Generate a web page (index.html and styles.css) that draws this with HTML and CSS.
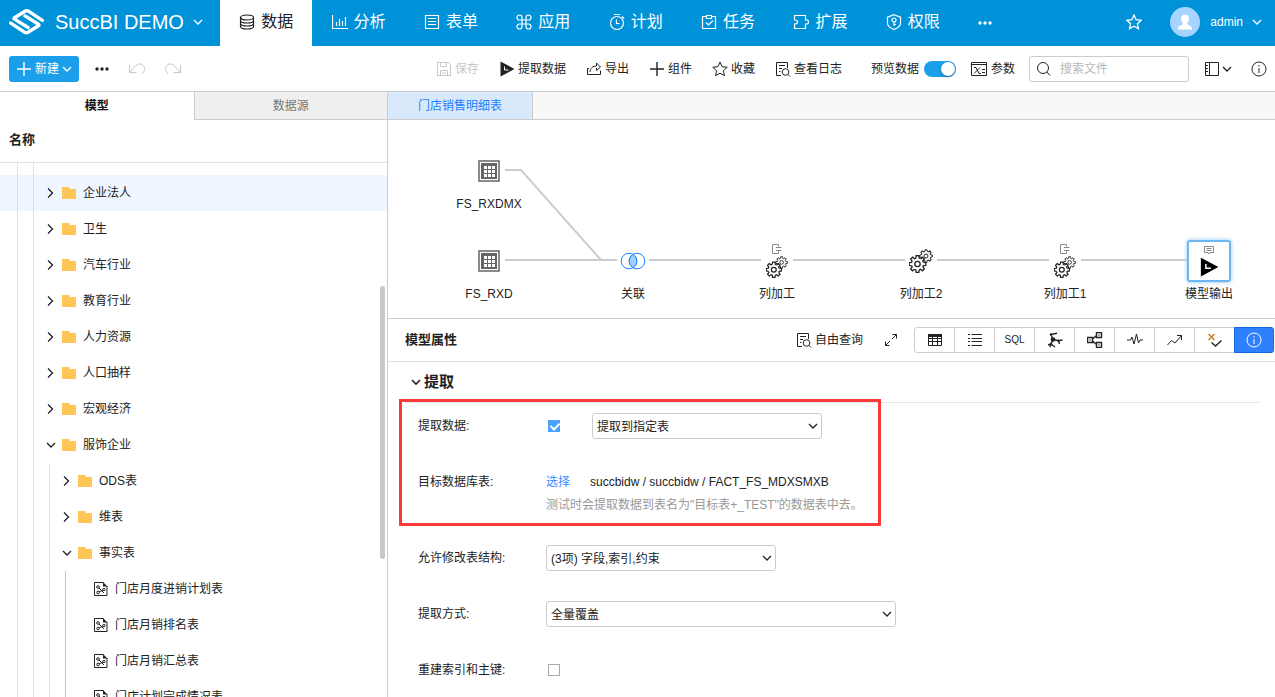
FILE: index.html
```
<!DOCTYPE html>
<html lang="zh-CN">
<head>
<meta charset="utf-8">
<title>SuccBI DEMO</title>
<link rel="stylesheet" href="styles.css">
</head>
<body>
<svg class="sprite" aria-hidden="true">
  <symbol id="down" viewBox="0 0 10 10"><path d="M1 3l4 4 4-4"/></symbol>
  <symbol id="right" viewBox="0 0 10 10"><path d="M2 .5L6.500 5 2 9.500"/></symbol>
  <symbol id="star" viewBox="0 0 16 16"><path d="M8 1l2.100 4.700 5.100.6-3.800 3.400 1.100 5L8 12.200l-4.500 2.500 1.100-5L.8 6.300l5.100-.6z"/></symbol>
  <symbol id="plus" viewBox="0 0 16 16"><path class="heavy" d="M8 1v14M1 8h14"/></symbol>
  <symbol id="info" viewBox="0 0 16 16"><circle cx="8" cy="8" r="7"/><path d="M8 7v5M8 4v1.500"/></symbol>
  <symbol id="dots" viewBox="0 0 16 16"><g class="solid"><circle cx="3" cy="8" r="1.700"/><circle cx="8" cy="8" r="1.700"/><circle cx="13" cy="8" r="1.700"/></g></symbol>
  <symbol id="log" viewBox="0 0 16 16"><path d="M6 14.500H1.500v-13h11V7M4 4.500h6M4 7.500h3M4 10.500h1.500"/><circle cx="10.500" cy="11" r="3.300"/><path d="M13 13.500l2 2"/></symbol>
  <symbol id="play" viewBox="0 0 16 16"><path class="solid" d="M1.500.5v15l14-7.500z"/><path class="inner" d="M5.500 5.500V9h4"/></symbol>
  <symbol id="folder" viewBox="0 0 14 12"><path class="folder-shape" d="M0 0h7l1 2h6v10H0z"/></symbol>
  <symbol id="model" viewBox="0 0 14 16"><path d="M9.500 1.500h-9v13h12.500V5"/><path class="solid" d="M9 1l4.500 4.500H9z"/><circle cx="4" cy="6" r="1.300"/><circle cx="4" cy="11.500" r="1.300"/><circle cx="10" cy="8.500" r="1.200"/><path d="M5 7l5 5M5 11l4-2"/></symbol>
  <symbol id="datatable" viewBox="0 0 22 22"><path class="grey" d="M1 1h20v20H1z"/><path class="grey-fill" d="M3 3h16v16H3z"/><path class="white-fill" d="M6 6h3v3H6zM10 6h3v3h-3zM14 6h3v3h-3zM6 10h3v3H6zM10 10h3v3h-3zM14 10h3v3h-3zM6 14h3v3H6zM10 14h3v3h-3zM14 14h3v3h-3z"/></symbol>
  <symbol id="gear" viewBox="-9 -9 18 18">
    <circle class="disc" r="5.600"/><circle r="2.400"/>
    <g id="quarter"><path d="M-1.500-5.300L-1.200-7.500H1.200L1.500-5.300 2.690-4.810"/><path transform="rotate(45)" d="M-1.500-5.300L-1.200-7.500H1.200L1.500-5.300 2.690-4.810"/></g>
    <use href="#quarter" transform="rotate(90)"/><use href="#quarter" transform="rotate(180)"/><use href="#quarter" transform="rotate(270)"/>
  </symbol>
  <symbol id="gears" viewBox="0 0 24 24"><use href="#gear" x="9.500" y="-.5" width="15" height="15"/><use href="#gear" x="-1.500" y="5" width="20" height="20"/></symbol>
  <symbol id="out" viewBox="0 0 10 10"><path d="M6.500 2.500v-2h-6v9h6v-2M4 3.500h5.500M4 6.500h5.500"/></symbol>
</svg>

<header class="header">
  <button class="brand">
    <svg class="logo" viewBox="0 0 36 28"><path d="M33.300 12.300L19.500 3.200q-1.800-1-3.500 0L5.500 9.700q-1 .7 0 1.400L19 19.500M1.700 15.100l13.800 9.100q1.800 1 3.500 0L29.500 17.700q1-.7 0-1.400L16 7.900"/></svg>
    <span>SuccBI DEMO</span>
    <svg class="icon tiny"><use href="#down"/></svg>
  </button>
  <nav class="nav">
    <a href="#" class="active"><svg class="icon" viewBox="0 0 16 16"><ellipse cx="8" cy="3.500" rx="6.500" ry="2.500"/><path d="M1.500 3.500v9c0 3.300 13 3.300 13 0v-9M1.500 6.500c0 3.300 13 3.300 13 0M1.500 9.500c0 3.300 13 3.300 13 0"/></svg>数据</a>
    <a href="#"><svg class="icon" viewBox="0 0 16 16"><path d="M.5 1v13.500H16M4.500 12V8M7.500 12V5M10.500 12V7M13.500 12V3"/></svg>分析</a>
    <a href="#"><svg class="icon" viewBox="0 0 16 16"><path d="M1.500 1.500h13v13h-13zM4 4.500h8M4 7.500h8M4 10.500h8"/></svg>表单</a>
    <a href="#"><svg class="icon" viewBox="0 0 16 16"><path d="M6 6V3.500A2.500 2.500 0 1 0 3.500 6h9A2.500 2.500 0 1 0 10 3.500v9a2.500 2.500 0 1 0 2.500-2.500h-9A2.500 2.500 0 1 0 6 12.500z"/></svg>应用</a>
    <a href="#"><svg class="icon" viewBox="0 0 16 16"><circle cx="8" cy="9" r="6.500"/><path d="M5 .5h6M13 2.500l2 2M7.500 5.500v4h3"/></svg>计划</a>
    <a href="#"><svg class="icon" viewBox="0 0 16 16"><path d="M5 2.500H1.500v12h13v-12H11M5.500 1.500h5v3h-5zM5 8.500l2.500 2.500L12 6.500"/></svg>任务</a>
    <a href="#"><svg class="icon" viewBox="0 0 16 16"><path d="M1.500 6V1.500h11V6q3-.5 3 2t-3 2v4.500h-11V10q3 0 3-2t-3-2z"/></svg>扩展</a>
    <a href="#"><svg class="icon" viewBox="0 0 16 16"><path d="M8 .7l6.500 2.500V9q0 4-6.500 6.500Q1.500 13 1.500 9V3.200z"/><circle cx="8" cy="6" r="2"/><path d="M8 8v4M8 10.500h2"/></svg>权限</a>
  </nav>
  <button class="plain more" aria-label="更多"><svg class="icon"><use href="#dots"/></svg></button>
  <div class="account">
    <button class="plain" aria-label="收藏夹"><svg class="icon"><use href="#star"/></svg></button>
    <svg class="avatar" viewBox="0 0 30 30"><circle cx="15" cy="15" r="15"/><path d="M15 7.500c2.500 0 4 1.800 4 4.200 0 2-1 3.600-1.800 4.300v1.500c2.500 1 4.800 1.500 4.800 4.500v.5H8V22c0-3 2.300-3.500 4.800-4.500V16c-.8-.7-1.800-2.300-1.800-4.300 0-2.400 1.500-4.200 4-4.200z"/></svg>
    <button class="plain user">admin<svg class="icon tiny"><use href="#down"/></svg></button>
  </div>
</header>

<div class="toolbar">
  <div class="tools-left">
    <button class="create"><svg class="icon"><use href="#plus"/></svg>新建<svg class="icon tiny"><use href="#down"/></svg></button>
    <button class="plain" aria-label="更多操作"><svg class="icon"><use href="#dots"/></svg></button>
    <button class="plain off history" aria-label="撤销"><svg class="icon wide" viewBox="0 0 18 16"><path d="M1.500 4v7.500h7M1.500 11.500l6-6.500q4-4 7.500-.5 3.500 4-1 8.500"/></svg></button>
    <button class="plain off history" aria-label="重做"><svg class="icon wide" viewBox="0 0 18 16"><path d="M16.500 4v7.500h-7M16.500 11.500l-6-6.500q-4-4-7.500-.5-3.500 4 1 8.500"/></svg></button>
  </div>
  <div class="tools-right">
    <div class="tool-list">
      <button class="plain off"><svg class="icon" viewBox="0 0 16 16"><path d="M1.500 1.500h11l2 2v11h-13zM4.500 1.500v4h6v-4M4.500 14.500v-5h7v5M6 12h4"/></svg>保存</button>
      <button class="plain"><svg class="icon"><use href="#play"/></svg>提取数据</button>
      <button class="plain"><svg class="icon" viewBox="0 0 16 16"><path d="M3 7.500H1.500v6h13v-4M4 11c0-4 3-6 6.500-6V2l4 4-4 3.500V7"/></svg>导出</button>
      <button class="plain"><svg class="icon"><use href="#plus"/></svg>组件</button>
      <button class="plain"><svg class="icon"><use href="#star"/></svg>收藏</button>
      <button class="plain"><svg class="icon"><use href="#log"/></svg>查看日志</button>
    </div>
    <label class="preview">预览数据<input type="checkbox" class="switch" checked></label>
    <button class="plain params"><svg class="icon" viewBox="0 0 16 16"><path d="M.5 1.500h15v13H.5zM.5 3.500h15M3 6.500h2l3 6h2M9 6.500l-6 6M11 8.500h3M11 11.500h3"/></svg>参数</button>
    <label class="search"><svg class="icon" viewBox="0 0 16 16"><circle cx="7" cy="7" r="5.500"/><path d="M11 11l3 3.500"/></svg><input type="search" placeholder="搜索文件" aria-label="搜索文件"></label>
    <button class="plain layout" aria-label="布局"><svg class="icon" viewBox="0 0 16 16"><path d="M1.500 1.500h13v13h-13zM5.500 1.500v13M2 4.500h2M2 7.500h2M2 10.500h2"/></svg><svg class="icon tiny"><use href="#down"/></svg></button>
    <button class="plain" aria-label="信息"><svg class="icon"><use href="#info"/></svg></button>
  </div>
</div>

<main class="main">
  <aside class="sidebar">
    <div class="side-tabs"><button class="current">模型</button><button>数据源</button></div>
    <div class="column-title">名称</div>
    <div class="tree">
      <div class="row stub"><i></i><i></i></div>
      <div class="row picked"><i></i><i></i><svg class="icon tiny"><use href="#right"/></svg><svg class="folder"><use href="#folder"/></svg>企业法人</div>
      <div class="row"><i></i><i></i><svg class="icon tiny"><use href="#right"/></svg><svg class="folder"><use href="#folder"/></svg>卫生</div>
      <div class="row"><i></i><i></i><svg class="icon tiny"><use href="#right"/></svg><svg class="folder"><use href="#folder"/></svg>汽车行业</div>
      <div class="row"><i></i><i></i><svg class="icon tiny"><use href="#right"/></svg><svg class="folder"><use href="#folder"/></svg>教育行业</div>
      <div class="row"><i></i><i></i><svg class="icon tiny"><use href="#right"/></svg><svg class="folder"><use href="#folder"/></svg>人力资源</div>
      <div class="row"><i></i><i></i><svg class="icon tiny"><use href="#right"/></svg><svg class="folder"><use href="#folder"/></svg>人口抽样</div>
      <div class="row"><i></i><i></i><svg class="icon tiny"><use href="#right"/></svg><svg class="folder"><use href="#folder"/></svg>宏观经济</div>
      <div class="row"><i></i><i></i><svg class="icon tiny"><use href="#down"/></svg><svg class="folder"><use href="#folder"/></svg>服饰企业</div>
      <div class="row"><i></i><i></i><i></i><svg class="icon tiny"><use href="#right"/></svg><svg class="folder"><use href="#folder"/></svg>ODS表</div>
      <div class="row"><i></i><i></i><i></i><svg class="icon tiny"><use href="#right"/></svg><svg class="folder"><use href="#folder"/></svg>维表</div>
      <div class="row"><i></i><i></i><i></i><svg class="icon tiny"><use href="#down"/></svg><svg class="folder"><use href="#folder"/></svg>事实表</div>
      <div class="row"><i></i><i></i><i></i><i class="near"></i><svg class="icon file"><use href="#model"/></svg>门店月度进销计划表</div>
      <div class="row"><i></i><i></i><i></i><i class="near"></i><svg class="icon file"><use href="#model"/></svg>门店月销排名表</div>
      <div class="row"><i></i><i></i><i></i><i class="near"></i><svg class="icon file"><use href="#model"/></svg>门店月销汇总表</div>
      <div class="row"><i></i><i></i><i></i><i class="near"></i><svg class="icon file"><use href="#model"/></svg>门店计划完成情况表</div>
      <div class="scrollbar"></div>
    </div>
  </aside>

  <section class="work">
    <div class="doc-tabs"><button>门店销售明细表</button></div>
    <div class="canvas">
      <svg class="links" width="860" height="190"><path d="M117 50h16l80 90M117 140h112M261 140h112M405 140h112M549 140h112M693 140h106"/></svg>
      <div class="node n1"><span class="pic"><svg class="tbl"><use href="#datatable"/></svg></span>FS_RXDMX</div>
      <div class="node n2"><span class="pic"><svg class="tbl"><use href="#datatable"/></svg></span>FS_RXD</div>
      <div class="node n3"><span class="pic"><svg class="join" viewBox="0 0 26 18"><circle cx="9" cy="9" r="7.800"/><circle cx="17" cy="9" r="7.800"/><path d="M13 2.300a7.800 7.800 0 0 1 0 13.400a7.800 7.800 0 0 1 0-13.400z"/></svg></span>关联</div>
      <div class="node n4"><span class="pic"><svg class="badge"><use href="#out"/></svg><svg class="gears"><use href="#gears"/></svg></span>列加工</div>
      <div class="node n5"><span class="pic"><svg class="gears big"><use href="#gears"/></svg></span>列加工2</div>
      <div class="node n6"><span class="pic"><svg class="badge"><use href="#out"/></svg><svg class="gears"><use href="#gears"/></svg></span>列加工1</div>
      <div class="node n7"><span class="pic chosen"><svg class="badge" viewBox="0 0 10 10"><path d="M.5 1.500h9v6H6l-1 1.500-1-1.500H.5zM2.500 3.500h5M2.500 5.500h5"/></svg><svg class="gears run"><use href="#play"/></svg></span>模型输出</div>
    </div>

    <div class="panel-head">
      <h2>模型属性</h2>
      <button class="plain"><svg class="icon"><use href="#log"/></svg>自由查询</button>
      <button class="plain expand" aria-label="展开"><svg class="icon" viewBox="0 0 16 16"><path d="M9.500 2.500h4v4M13.500 2.500L9 7M6.500 13.500h-4v-4M2.500 13.500L7 9"/></svg></button>
      <div class="views">
        <button aria-label="表格"><svg class="icon" viewBox="0 0 16 16"><path d="M1.500 2.500h13v11h-13zM1.500 6.500h13M1.500 9.500h13M5.500 4v9.500M10.500 4v9.500"/><path class="solid" d="M1 2h14v3H1z"/></svg></button>
        <button aria-label="列表"><svg class="icon" viewBox="0 0 16 16"><path d="M4.500 2.500H15M4.500 6.500H15M4.500 9.500H15M4.500 13.500H15M1 2.500h2M1 6.500h2M1 9.500h2M1 13.500h2"/></svg></button>
        <button class="sql">SQL</button>
        <button aria-label="血缘"><svg class="icon" viewBox="0 0 16 16"><path class="heavy" d="M6 7.500L4 2.500l6-1.200M6 7.500l5.500 1.200 4-.7M11.500 8.700l1 3.300M6 7.500l-2 4.500-3 1M4 12l-1 3M4 12l4 3"/><g class="solid"><circle cx="6" cy="7.500" r="2.300"/><circle cx="4" cy="2.500" r="1.200"/><circle cx="11.500" cy="8.700" r="1.200"/><circle cx="4" cy="12" r="1.200"/></g></svg></button>
        <button aria-label="关系"><svg class="icon" viewBox="0 0 16 16"><path class="heavy" d="M.5 5.500h5v5h-5zM9.500.5h5v5h-5zM9.500 10.500h5v5h-5zM5.500 7l4-3.500M5.500 9l4 3.500M2.500 8h1M11.500 3h1M11.500 13h1"/></svg></button>
        <button aria-label="监控"><svg class="icon" viewBox="0 0 16 16"><path d="M0 8h3.500l1.500-3 2 7 2.500-10 2 9 1.500-3H16"/></svg></button>
        <button aria-label="趋势"><svg class="icon" viewBox="0 0 16 16"><path d="M.5 13l4-4.500L8 11l6.500-7.500M10 3.500h4.500V8"/></svg></button>
        <button aria-label="校验"><svg class="icon" viewBox="0 0 16 16"><path class="amber" d="M1.500 2l6 6M7.500 2l-6 6"/><path class="heavy" d="M4.500 10.500l4 3.500 6-5.500"/></svg></button>
        <button class="on" aria-label="属性"><svg class="icon"><use href="#info"/></svg></button>
      </div>
    </div>

    <div class="panel">
      <h3><svg class="icon tiny"><use href="#down"/></svg>提取</h3>
      <form class="form">
        <label for="extract">提取数据:</label>
        <div class="control"><input type="checkbox" class="tick" id="extract" checked>
          <span class="pick medium"><select aria-label="提取目标"><option>提取到指定表</option></select><svg class="icon tiny"><use href="#down"/></svg></span></div>
        <span>目标数据库表:</span>
        <div><div class="control target"><a href="#">选择</a><span>succbidw / succbidw / FACT_FS_MDXSMXB</span></div>
          <p class="hint">测试时会提取数据到表名为"目标表+_TEST"的数据表中去。</p></div>
        <label for="alter">允许修改表结构:</label>
        <div class="control"><span class="pick medium"><select id="alter"><option>(3项) 字段,索引,约束</option></select><svg class="icon tiny"><use href="#down"/></svg></span></div>
        <label for="mode">提取方式:</label>
        <div class="control"><span class="pick large"><select id="mode"><option>全量覆盖</option></select><svg class="icon tiny"><use href="#down"/></svg></span></div>
        <label for="rebuild">重建索引和主键:</label>
        <div class="control"><input type="checkbox" class="tick" id="rebuild"></div>
      </form>
      <div class="callout"></div>
    </div>
  </section>
</main>
</body>
</html>
```

FILE: styles.css
```
* { box-sizing: border-box; }
body {
  margin: 0;
  height: 100vh;
  display: flex;
  flex-direction: column;
  overflow: hidden;
  background: #fff;
  color: #222;
  font: 12px/18px "Liberation Sans", "Noto Sans CJK SC", sans-serif;
}
button, input, select { font: inherit; color: inherit; margin: 0; }
button { border: 0; background: none; padding: 0; }
svg { flex: none; fill: none; stroke: currentColor; display: block; }
.sprite { position: absolute; width: 0; height: 0; }
.icon { width: 16px; height: 16px; }
.icon.tiny { width: 10px; height: 10px; stroke-width: 1.3; }
.icon.wide { width: 18px; }
.heavy { stroke-width: 1.4; }
.solid { fill: currentColor; stroke: none; }
.inner { stroke: #fff; }
.plain { display: flex; align-items: center; gap: 3px; white-space: nowrap; }
.off { color: #c8c8c8; }

/* header */
.header { flex: none; height: 46px; display: flex; background: #0092d9; color: #fff; }
.brand { flex: 0 0 220px; display: flex; align-items: center; padding: 0 0 2px 9px; font-size: 20px; white-space: nowrap; }
.logo { width: 36px; height: 28px; margin-right: 10px; stroke-width: 3.4; stroke-linejoin: round; stroke-linecap: round; }
.brand .tiny { margin-left: 9px; }
.nav { flex: 0 1 739px; display: grid; grid-template-columns: repeat(8, 1fr); }
.nav a { display: flex; align-items: center; justify-content: center; gap: 6px; padding-bottom: 2px; color: inherit; text-decoration: none; font-size: 16px; white-space: nowrap; }
.nav .active { background: #fff; color: #222; }
.nav .icon { stroke-width: 1.2; }
.more { margin-left: 18px; }
.account { margin-left: auto; display: flex; align-items: center; padding: 0 13px 2px 0; }
.account .icon { stroke-width: 1.3; }
.avatar { width: 30px; height: 30px; margin: 0 10px 0 28px; stroke: none; }
.avatar circle { fill: #a6d4ff; }
.avatar path { fill: #fff; }
.user { gap: 9px; }

/* toolbar */
.toolbar { flex: none; height: 46px; display: flex; align-items: center; justify-content: space-between; border-bottom: 1px solid #ccc; padding: 0 8px 0 9px; }
.tools-left, .tools-right, .tool-list { display: flex; align-items: center; }
.tools-left { gap: 15px; }
.history { margin-left: 3px; }
.tool-list { gap: 20px; }
.create { display: flex; align-items: center; gap: 3px; width: 70px; height: 26px; padding-left: 7px; border-radius: 3px; background: #1c9fea; color: #fff; }
.preview { display: flex; align-items: center; gap: 5px; margin-left: 29px; }
.switch { appearance: none; width: 32px; height: 16px; padding: 1px; border-radius: 8px; background: #1c9fea; }
.switch::before { content: ""; display: block; width: 14px; height: 14px; margin-left: 16px; border-radius: 7px; background: #fff; box-shadow: 0 1px 2px #0006; }
.params { margin-left: 15px; gap: 4px; }
.search { display: flex; align-items: center; gap: 8px; width: 160px; height: 26px; margin: 0 15px 0 14px; padding: 0 6px; border: 1px solid #ccc; border-radius: 3px; }
.search input { width: 100%; min-width: 0; border: 0; padding: 0; outline: 0; background: none; }
.search input::placeholder { color: #b8b8b8; }
.layout { margin-right: 19px; gap: 2px; }

/* sidebar */
.main { flex: 1; min-height: 0; display: flex; }
.sidebar { flex: 0 0 388px; display: flex; flex-direction: column; border-right: 1px solid #ccc; }
.side-tabs { display: grid; grid-template-columns: 1fr 1fr; height: 28px; flex: none; }
.side-tabs button { background: #efefef; color: #777; border-left: 1px solid #ccc; border-bottom: 1px solid #ccc; }
.side-tabs .current { background: #fff; color: #111; font-weight: bold; border: 0; }
.column-title { flex: none; height: 43px; padding-left: 9px; border-bottom: 1px solid #e2e2e2; font-size: 13px; line-height: 40px; font-weight: bold; }
.tree { flex: 1; min-height: 0; overflow: hidden; position: relative; }
.row { height: 36px; display: flex; align-items: center; white-space: nowrap; }
.row i { align-self: stretch; width: 16px; border-right: 1px solid #e0e0e0; }
.row i:first-child { width: 18px; }
.row .near { border-color: #c4c4c4; }
.row.stub { height: 12px; }
.picked { background: #f0f6ff; }
.row .tiny { margin: 0 6px 0 12px; }
.folder { width: 14px; height: 12px; margin-right: 7px; }
.folder-shape { fill: #fdc656; stroke: none; }
.file { width: 14px; height: 16px; margin: 0 7px 0 28px; }
.scrollbar { position: absolute; right: 2px; top: 123px; width: 5px; height: 273px; border-radius: 3px; background: #c8c8c8; }

/* work area */
.work { flex: 1; min-width: 0; display: flex; flex-direction: column; }
.doc-tabs { flex: none; height: 28px; display: flex; background: #f8f8f8; border-bottom: 1px solid #ccc; }
.doc-tabs button { padding: 0 30px; background: #d8e9fc; color: #1a80ff; border-right: 1px solid #ccc; }
.canvas { flex: none; height: 199px; position: relative; border-bottom: 1px solid #ccc; overflow: hidden; }
.links { position: absolute; left: 0; top: 0; stroke: #ccc; stroke-width: 2; }
.node { position: absolute; width: 90px; display: flex; flex-direction: column; align-items: center; gap: 3px; white-space: nowrap; }
.pic { width: 44px; height: 42px; display: flex; flex-direction: column; align-items: center; justify-content: center; }
.chosen { border: 2px solid #6db6f0; border-radius: 3px; background: #fff; box-shadow: 0 0 4px #8cc8f8; }
.n1 { left: 56px; top: 30px; }
.n2 { left: 56px; top: 120px; }
.n3 { left: 200px; top: 120px; }
.n4 { left: 344px; top: 120px; }
.n5 { left: 488px; top: 120px; }
.n6 { left: 632px; top: 120px; }
.n7 { left: 776px; top: 120px; }
.tbl { width: 22px; height: 22px; stroke: none; }
.grey { stroke: #666; stroke-width: 1.5; }
.grey-fill { fill: #666; }
.white-fill { fill: #fff; }
.join { width: 26px; height: 18px; stroke: #1a84ff; }
.join path { fill: #a0d0ff; }
.gears { width: 22px; height: 22px; stroke-width: 1.2; }
.gears.big { width: 24px; height: 24px; }
.gears.run { width: 20px; height: 20px; color: #000; }
.disc { fill: #fff; stroke: none; }
.badge { width: 10px; height: 10px; margin-bottom: 2px; color: #888; }

/* properties */
.panel-head { flex: none; height: 43px; display: flex; align-items: center; padding: 0 1px 0 17px; border-bottom: 1px solid #e2e2e2; }
.panel-head h2 { margin: 0 auto 0 0; font-size: 13px; line-height: 18px; }
.expand { margin: 0 15px 0 20px; }
.views { display: flex; border: 1px solid #ccc; border-radius: 3px; height: 26px; }
.views button { width: 40px; display: flex; align-items: center; justify-content: center; border-right: 1px solid #ccc; }
.views .sql { font-size: 10px; }
.views .on { margin: -1px; border: 1px solid #1268e0; border-radius: 0 3px 3px 0; background: #2e80fe; color: #fff; }
.amber { stroke: #c87820; stroke-width: 1.4; }
.panel { flex: 1; min-height: 0; overflow: hidden; position: relative; padding: 0 15px 0 17px; }
.panel h3 { margin: 0; height: 41px; display: flex; align-items: center; gap: 3px; padding-left: 6px; border-bottom: 1px solid #e6e6e6; font-size: 15px; }
.panel h3 .tiny { stroke-width: 1.6; }
.form { display: grid; grid-template-columns: 128px 1fr; row-gap: 30px; padding: 10px 0 0 13px; line-height: 26px; }
.control { display: flex; align-items: center; height: 26px; }
.target { gap: 20px; }
.target a { color: #3a8cff; text-decoration: none; }
.hint { margin: 0; line-height: 20px; color: #999; }
.tick { appearance: none; width: 12px; height: 12px; margin: 0 32px 0 2px; border: 1px solid #aaa; background: #fff; }
.tick:checked { border-color: #4aa2fa; background: #4aa2fa; }
.tick:checked::before { content: ""; display: block; width: 4px; height: 7px; margin-left: 3px; border: solid #fff; border-width: 0 2px 2px 0; transform: rotate(45deg); }
.pick { position: relative; }
.pick.medium { width: 230px; }
.pick.large { width: 350px; }
.pick select { appearance: none; display: block; width: 100%; height: 26px; padding: 0 24px 0 4px; border: 1px solid #ccc; border-radius: 3px; background: #fff; }
.pick .tiny { position: absolute; right: 4px; top: 8px; }
.callout { position: absolute; left: 11px; top: 37px; width: 482px; height: 127px; border: 3px solid #fc3939; pointer-events: none; }
```
